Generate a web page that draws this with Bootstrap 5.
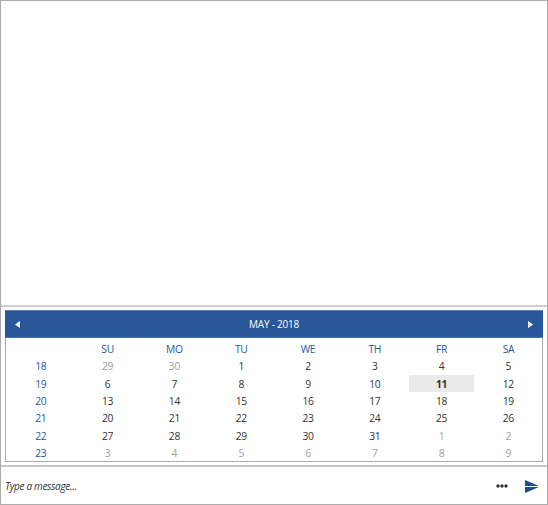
<!DOCTYPE html>
<html lang="en">
<head>
<meta charset="utf-8">
<meta name="viewport" content="width=device-width, initial-scale=1">
<title>Chat</title>
<link href="https://cdn.jsdelivr.net/npm/bootstrap@5.3.0/dist/css/bootstrap.min.css" rel="stylesheet">
<style>
body{height:505px;overflow:hidden;font-family:"Open Sans","Noto Sans",sans-serif;font-size:10.3px;line-height:1;color:#333}
.chat{border:1px solid #ababab}
.picker{height:160px;padding:3px 4px;border-top:2px solid #cfcfcf}
.cal{border:1px solid #ababab;border-top:0}
.cal-head{height:28px;margin:0 -1px;padding:0 10px;background:#2a579a;border-top:1px solid #5c7fb3;border-bottom:1px solid #4a70aa;color:#fff;font-size:10px;letter-spacing:-.22px}
.days{display:grid;grid-template-columns:repeat(8,66.8px);grid-template-rows:repeat(7,17.35px);padding:2px 0 0 1.4px}
.days>span{display:flex;align-items:center;justify-content:center;padding-top:1px;letter-spacing:-.35px}
.days>.wk{color:#2a579a}
.days>.out{color:#a0a0a0}
.days>.today{background:#eaeaea;font-weight:700;margin:0 .5px .3px}
.entry{height:39px;border-top:2px solid #c6c6c6;padding:1px 7px 0 4px}
.hint{font-size:10px;font-style:italic;letter-spacing:-.31px}
.more{margin-right:17px}
</style>
<script src="https://cdn.jsdelivr.net/npm/bootstrap@5.3.0/dist/js/bootstrap.bundle.min.js"></script>
</head>
<body>
<main class="chat d-flex flex-column h-100">
<section class="flex-grow-1"></section>
<section class="picker d-flex flex-column">
<div class="cal flex-grow-1">
<header class="cal-head d-flex align-items-center justify-content-between">
<svg width="5" height="7" viewBox="0 0 5 7"><path d="M5 0v7L0 3.5z" fill="#fff"/></svg>
<span>MAY - 2018</span>
<svg width="5" height="7" viewBox="0 0 5 7"><path d="M0 0v7l5-3.5z" fill="#fff"/></svg>
</header>
<div class="days">
<span></span><span class="wk">SU</span><span class="wk">MO</span><span class="wk">TU</span><span class="wk">WE</span><span class="wk">TH</span><span class="wk">FR</span><span class="wk">SA</span>
<span class="wk">18</span><span class="out">29</span><span class="out">30</span><span>1</span><span>2</span><span>3</span><span>4</span><span>5</span>
<span class="wk">19</span><span>6</span><span>7</span><span>8</span><span>9</span><span>10</span><span class="today">11</span><span>12</span>
<span class="wk">20</span><span>13</span><span>14</span><span>15</span><span>16</span><span>17</span><span>18</span><span>19</span>
<span class="wk">21</span><span>20</span><span>21</span><span>22</span><span>23</span><span>24</span><span>25</span><span>26</span>
<span class="wk">22</span><span>27</span><span>28</span><span>29</span><span>30</span><span>31</span><span class="out">1</span><span class="out">2</span>
<span class="wk">23</span><span class="out">3</span><span class="out">4</span><span class="out">5</span><span class="out">6</span><span class="out">7</span><span class="out">8</span><span class="out">9</span>
</div>
</div>
</section>
<footer class="entry d-flex align-items-center">
<span class="hint me-auto">Type a message...</span>
<svg class="more" width="12" height="4" viewBox="0 0 12 4" fill="#303030"><circle cx="2" cy="2" r="1.7"/><circle cx="6" cy="2" r="1.7"/><circle cx="10" cy="2" r="1.7"/></svg>
<svg width="15" height="13" viewBox="0 0 15 13" fill="#1f4a8c"><path d="M0 0l14 5.9H0zM0 7.1h14L0 13z"/></svg>
</footer>
</main>
</body>
</html>
